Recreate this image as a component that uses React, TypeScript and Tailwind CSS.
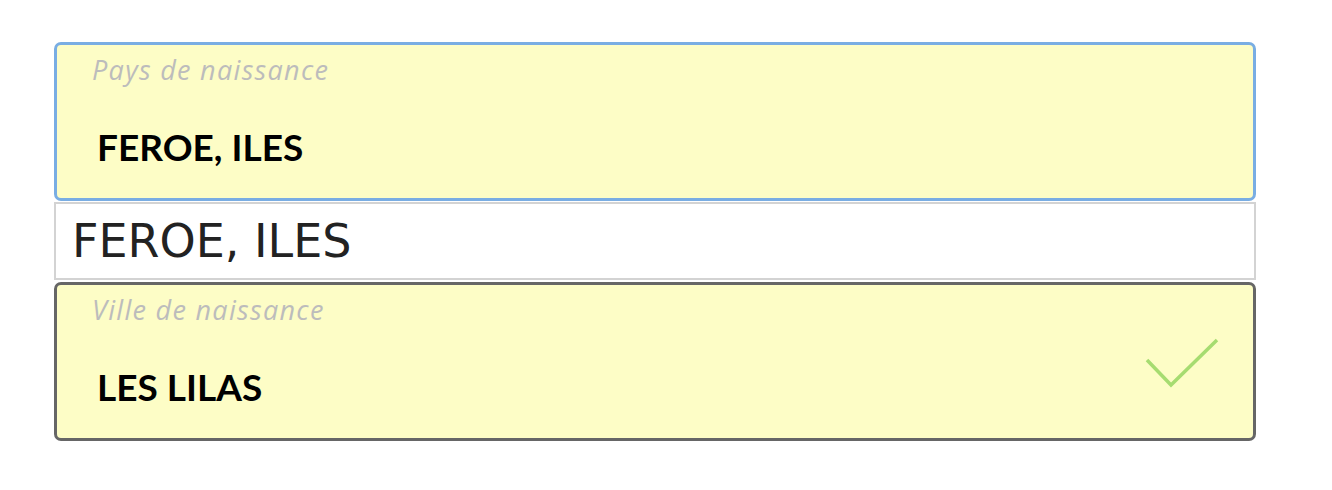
import React from "react";

function Field({
  label,
  value,
  borderClass,
  check,
}: {
  label: string;
  value: string;
  borderClass: string;
  check?: boolean;
}) {
  return (
    <div
      className={`flex h-[159px] items-center rounded-[7px] border-[3px] bg-[#fdfdc6] ${borderClass}`}
    >
      <div className="flex h-full flex-1 flex-col pl-[35px] pt-[10px]">
        <div className="font-['Open_Sans',sans-serif] text-[27px] italic leading-[30px] tracking-[1.3px] text-[#bcbcbc]">
          {label}
        </div>
        <div className="ml-[5px] mt-[42px] font-['Lato',sans-serif] text-[37px] font-bold leading-[40px] text-black">
          {value}
        </div>
      </div>
      {check && (
        <svg width="76" height="52" viewBox="0 0 76 52" className="mr-[33px] mt-[3px]">
          <polyline
            points="3,23 27,48 73,3"
            fill="none"
            stroke="#a6dc70"
            strokeWidth="3.5"
          />
        </svg>
      )}
    </div>
  );
}

export default function App() {
  return (
    <div className="min-h-[490px] bg-white pl-[54px] pt-[42px]">
      <div className="flex w-[1202px] flex-col">
        <Field label="Pays de naissance" value="FEROE, ILES" borderClass="border-[#79ade3]" />
        <div className="mt-[1px] flex h-[78px] items-center border-2 border-[#d3d3d3] bg-white pl-[16px] font-['DejaVu_Sans',sans-serif] text-[46px] leading-none text-[#222222]">
          FEROE, ILES
        </div>
        <div className="mt-[2px]">
          <Field
            label="Ville de naissance"
            value="LES LILAS"
            borderClass="border-[#666666]"
            check
          />
        </div>
      </div>
    </div>
  );
}
